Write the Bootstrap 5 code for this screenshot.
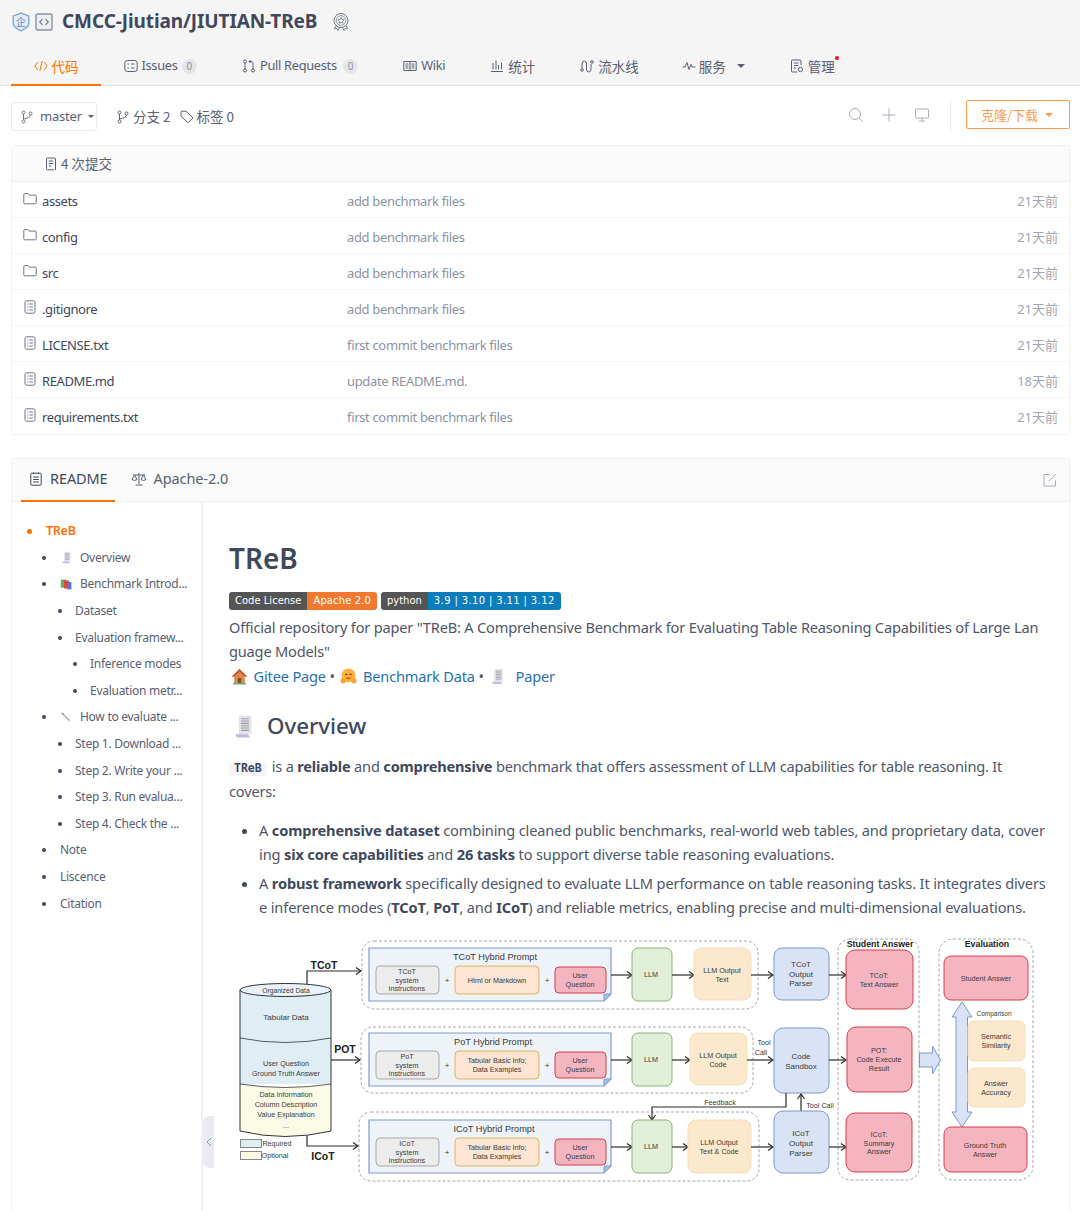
<!DOCTYPE html>
<html lang="en">
<head>
  <meta charset="UTF-8">
  <title>CMCC-Jiutian/JIUTIAN-TReb</title>
  <meta name="viewport" content="width=device-width, initial-scale=1">
  <link href="https://cdn.jsdelivr.net/npm/bootstrap@5.3.0/dist/css/bootstrap.min.css" rel="stylesheet">
  <style>
    html, body { height: 100%; overflow: hidden; }
    body { font-family: "Noto Sans", "Noto Sans CJK SC", sans-serif; font-size: 14px; color: #40485b; background: #fff; }
    .ic { width: 14px; height: 14px; fill: none; stroke: currentColor; stroke-width: 1; flex: none; }
    .cjk { font-family: "Noto Sans CJK SC", "Noto Sans", sans-serif; }

    .repo-head { background: #f5f5f5; border-bottom: 1px solid #e3e3e3; height: 86px; flex: none; }
    .repo-title { height: 43px; padding-left: 12px; gap: 5px; }
    .repo-title h1 { font-size: 19px; font-weight: 700; letter-spacing: -.1px; color: #40485b; margin: 0 10px 0 4px; }
    .repo-nav { padding-left: 11px; height: 43px; }
    .repo-nav a { display: flex; align-items: center; gap: 4px; padding: 5px 22.5px 0; height: 43px; color: #5a6071; text-decoration: none; font-size: 12.8px; letter-spacing: -.3px; position: relative; border-bottom: 2px solid transparent; }
    .repo-nav a.cjk { font-size: 13.5px; letter-spacing: 0; }
    .repo-nav a.on { color: #fe7300; border-bottom-color: #fe7300; }
    .repo-nav a.svc { margin-left: -2px; gap: 3px; }
    .cnt { background: #e3e5e9; color: #8c92a4; border-radius: 8px; font-size: 10px; line-height: 15px; padding: 0 5px; margin-left: 2px; }
    .cnt-tight { margin-left: 0; }
    .caret-dn { width: 0; height: 0; border: 4px solid transparent; border-top-color: currentColor; border-bottom: 0; display: inline-block; }
    .red-dot { position: absolute; top: 13px; right: 18px; width: 4px; height: 4px; background: #f00d2c; border-radius: 50%; }

    .tool-row { padding: 14px 10px 0 11px; height: 59px; flex: none; }
    .branch-btn { height: 29px; width: 86px; margin-top: 2px; border: 1px solid #e8ebf0; border-radius: 3px; color: #5a6071; font-size: 13px; letter-spacing: -.2px; padding: 0 5px 0 8px; gap: 6px; }
    .tool-link { color: #5a6071; font-size: 13.5px; gap: 3px; height: 29px; margin-top: 2px; }
    .tool-ic { color: #a9aebb; width: 16px; height: 16px; }
    .tool-sep { width: 1px; height: 32px; background: #e9ebef; margin: 0 15px 0 20px; }
    .clone-btn { width: 104px; height: 29px; padding: 0 2px 0 0; border: 1px solid #fe9a4f; border-radius: 2px; color: #fe9a4f; font-size: 13px; gap: 7px; }

    .file-card { margin: 0 10px 0 11px; border: 1px solid #eef0f3; border-radius: 3px; height: 290px; flex: none; overflow: hidden; }
    .file-head { height: 36px; background: #fbfbfb; border-bottom: 1px solid #eef0f3; padding-left: 32px; gap: 3px; color: #5a6071; font-size: 13.5px; }
    .file-row { height: 36px; padding: 4px 11px 0; border-color: #f3f4f6; color: #40485b; font-size: 13px; letter-spacing: -.4px; }
    .file-name { width: 324px; gap: 5px; }
    .file-name .ic { color: #6f7585; margin-top: -6px; }
    .file-msg { color: #8c92a4; letter-spacing: -.34px; }
    .file-time { color: #a1a6b3; margin-left: auto; letter-spacing: 0; }

    .readme-card { margin: 23px 10px -3px 11px; border: 1px solid #eef0f3; border-radius: 3px 3px 0 0; min-height: 0; }
    .readme-tabs { height: 43px; background: #fbfbfb; border-bottom: 1px solid #eef0f3; padding-left: 9px; flex: none; }
    .readme-tabs a { display: flex; align-items: center; gap: 7px; height: 43px; padding: 0 7px 2px 8px; color: #5a6071; text-decoration: none; font-size: 14.5px; letter-spacing: -.1px; border-bottom: 2px solid transparent; }
    .readme-tabs a.on { border-bottom-color: #fe7300; color: #40485b; }
    .toc-side { width: 191px; border-right: 2px solid #eef1f5; padding-top: 16px; flex: none; position: relative; font-size: 12px; letter-spacing: -.27px; }
    .toc-line { height: 26.6px; display: flex; align-items: center; color: #5a6071; white-space: nowrap; position: relative; }
    .toc-line::before { content: ""; width: 4px; height: 4px; border-radius: 50%; background: #40485b; margin-right: 14px; flex: none; }
    .lv0 { padding-left: 15px; color: #fe7300; font-weight: 600; font-size: 12.5px; }
    .lv0::before { background: #fe7300; width: 5px; height: 5px; margin-right: 14px; }
    .lv1 { padding-left: 30px; }
    .lv2 { padding-left: 46px; }
    .lv2::before { margin-right: 13px; }
    .lv3 { padding-left: 61px; }
    .lv3::before { margin-right: 13px; }
    .emo { width: 13px; height: 13px; margin: 0 7px 0 0; flex: none; }
    .fold-tab { position: absolute; right: -13px; top: 614px; width: 11px; height: 52px; background: #e8ecf1; border-radius: 6px 0 0 6px; color: #8c92a4; }

    .md-body { padding: 38px 20px 0 26px; font-size: 14.6px; letter-spacing: -.19px; line-height: 24.4px; color: #4f5668; word-break: break-all; min-width: 0; }
    .md-body h1 { font-size: 28px; font-weight: 600; letter-spacing: 0; line-height: 36px; color: #40485b; margin: 0 0 16px; }
    .md-body h2 { font-size: 22.4px; font-weight: 500; letter-spacing: -.1px; line-height: 30px; color: #40485b; margin: 23px 0 13px; display: flex; align-items: center; gap: 11px; }
    .md-body h2 svg { margin-left: 2px; }
    .md-body a { color: #2a70ac; text-decoration: none; }
    .md-body b { color: #40485b; font-weight: 700; }
    .md-body ul { padding-left: 30px; margin: 15px 0 14px; letter-spacing: -.14px; }
    .md-body li { margin-bottom: 4px; }
    .md-body li::marker { color: #40485b; }
    .md-body p { margin: 0; }
    .sh-badge { display: inline-flex; height: 18px; border-radius: 3px; overflow: hidden; font-family: "DejaVu Sans", sans-serif; font-size: 10px; letter-spacing: 0; line-height: 18px; color: #fff; margin-right: 4px; word-break: normal; }
    .sh-badge span { padding: 0 6px; white-space: nowrap; }
    .sh-l { background: #555; }
    .sh-o { background: #f0792f; letter-spacing: .1px; }
    .sh-b { background: #0b7cbc; letter-spacing: .37px; }
    .badge-row { height: 18px; margin-bottom: 5px; display: flex; }
    .name-pill { background: #f5f5f7; border-radius: 4px; padding: 1px 5px; margin-right: 5px; font-family: "DejaVu Sans Mono", monospace; font-size: 11.5px; line-height: 1; display: inline-block; font-weight: 700; letter-spacing: 0; color: #40485b; }
    .emo-in { width: 17px; height: 17px; vertical-align: -3px; margin: 0 2px; }
    .flow-pic { display: block; width: 820px; height: 260px; margin: 14px 0 0 1px; }
    .flow-pic text { font-family: "Liberation Sans", sans-serif; fill: #3a3a3a; text-anchor: middle; font-size: 7.2px; letter-spacing: 0; }
    .flow-pic .tt { font-size: 9.2px; }
    .flow-pic .hd { font-size: 8.8px; font-weight: 700; fill: #222; }
    .flow-pic .lb { font-size: 10.5px; font-weight: 700; fill: #222; }
    .flow-pic .bg { font-size: 8px; }
    .dash { fill: none; stroke: #a8a8a8; stroke-width: 1; stroke-dasharray: 3 2; }
    .pr { fill: #eef3f9; stroke: #7c9bcb; stroke-width: 1.2; }
    .gr { fill: #ececec; stroke: #a9a9a9; stroke-width: 1; }
    .og { fill: #fde4d3; stroke: #d9b55c; stroke-width: 1; }
    .rd { fill: #f5b5c0; stroke: #d33f4b; stroke-width: 1; }
    .lg { fill: #e1eed8; stroke: #8fb17a; stroke-width: 1; }
    .yl { fill: #fbe8cd; stroke: #f5dfb8; stroke-width: 1; }
    .bl { fill: #d9e3f5; stroke: #7b9acb; stroke-width: 1; }
    .ln { fill: none; stroke: #2b2b2b; stroke-width: 1.2; }
  </style>
</head>
<body>
<svg class="d-none">
  <symbol id="i-folder" viewBox="0 0 14 14"><path d="M.8 2.500q0-.9.900-.9h3.200l1.300 1.500h6.100q.9 0 .9.900v6.900q0 .9-.9.900H1.700q-.9 0-.9-.9z"/></symbol>
  <symbol id="i-file" viewBox="0 0 14 14"><rect x="2" y=".8" width="10" height="12.400" rx="1.600"/><path d="M4.300 4h1M6.500 4h3.400M4.300 7h1M6.500 7h3.400M4.300 10h1M6.500 10h3.400"/></symbol>
  <symbol id="i-commit" viewBox="0 0 14 14"><path d="M10 12.800H3.500q-1 0-1-1V2q0-1 1-1h7q1 0 1 1v8M4.800 4h4.400M4.800 6.500h4.400M4.800 9h2.400M11.500 10v3"/></symbol>
  <symbol id="i-branch" viewBox="0 0 14 14"><circle cx="3.500" cy="2.500" r="1.500"/><circle cx="3.500" cy="11.500" r="1.500"/><circle cx="10.500" cy="3.500" r="1.500"/><path d="M3.500 4v6M10.500 5q0 3-7 4"/></symbol>
  <symbol id="i-tag" viewBox="0 0 14 14"><path d="M1 2.200q0-1 1-1h4l7 6.600-5 5-7-6.600zM4 4.400h.4"/></symbol>
  <symbol id="i-readme" viewBox="0 0 14 14"><rect x="1.800" y="1.200" width="10.400" height="12" rx="1"/><path d="M4.500.5v1.600M9.500.5v1.600M4.200 5h5.600M4.200 7.500h5.600M4.200 10h5.600"/></symbol>
  <symbol id="i-scale" viewBox="0 0 16 14"><path d="M8 1v11M4.500 13h7M2 3h12M3.500 3 1 7.500q2.500 2 5 0L3.500 3M12.500 3 10 7.500q2.500 2 5 0L12.500 3"/></symbol>
  <symbol id="e-house" viewBox="0 0 16 16"><path d="M8 1 .8 8h2.200v6.500h10V8h2.200z" fill="#d98a4b"/><path d="M8 1 .8 8h2.200L8 3.500 13 8h2.200z" fill="#c9503c"/><rect x="6.500" y="9.500" width="3" height="5" fill="#7a4a2b"/><rect x="2" y="14" width="12" height="1.500" fill="#5fb36a"/></symbol>
  <symbol id="e-hug" viewBox="0 0 16 16"><circle cx="8" cy="7" r="6.500" fill="#fbb33c"/><path d="M5 6.500q1-1.500 2 0M9 6.500q1-1.500 2 0" fill="none" stroke="#7a4a1f"/><path d="M5 9q3 3 6 0" fill="#c94f3c"/><circle cx="3" cy="12" r="2.500" fill="#f9a531"/><circle cx="13" cy="12" r="2.500" fill="#f9a531"/></symbol>
  <symbol id="e-scroll" viewBox="0 0 16 16"><rect x="5" y="1" width="8" height="12" fill="#e3e3e8"/><path d="M6.500 3h5M6.500 4.500h5M6.500 6h5M6.500 7.500h5M6.500 9h5M6.500 10.500h5" stroke="#9a9aa6" stroke-width=".7"/><path d="M3 13h8q.5 2 2 2H4.500Q3 15 3 13z" fill="#c8b8e0"/></symbol>
  <symbol id="e-books" viewBox="0 0 16 16"><rect x="1" y="2" width="7" height="10" fill="#58b368"/><rect x="5" y="3" width="6" height="10" fill="#e0453f"/><rect x="9" y="5" width="5" height="9" fill="#5b6fd8"/></symbol>
  <symbol id="e-wrench" viewBox="0 0 16 16"><path d="M3 3l9 9" stroke="#b9bdc6" stroke-width="2.500"/><path d="M2 1.500 5 3 3 5 1.500 2z" fill="#9da2ad"/></symbol>
</svg>

<div class="d-flex flex-column h-100">

  <div class="repo-head">
    <div class="repo-title d-flex align-items-center">
      <svg width="18" height="20" viewBox="0 0 18 20">
        <path d="M9 1.200 16.800 4v7.600q0 4-7.800 7.200-7.800-3.200-7.800-7.200V4z" fill="#e4ecf6" stroke="#7ea3d0" stroke-width="1.300"/>
        <text x="9" y="13.500" font-size="10" text-anchor="middle" fill="#5e8bc4" font-family="Noto Sans CJK SC">企</text>
      </svg>
      <svg width="18" height="18" viewBox="0 0 18 18"><rect x="1" y="1" width="16" height="16" rx="1.500" fill="#eceef1" stroke="#8c92a4" stroke-width="1.400"/><path d="M7.400 6.200 4.800 9l2.600 2.800M10.600 6.200 13.200 9l-2.600 2.800" fill="none" stroke="#7a8092" stroke-width="1.200"/></svg>
      <h1>CMCC-Jiutian/JIUTIAN-TReB</h1>
      <svg width="18" height="20" viewBox="0 0 18 20" fill="none" stroke="#6f7585"><circle cx="9" cy="8.500" r="7"/><circle cx="9" cy="8.500" r="4.800" stroke-width=".7"/><path d="m9 5.400 1 2 2.100.3-1.500 1.500.4 2.100L9 10.300l-2 1 .4-2.100L5.900 7.700 8 7.400z" stroke-width=".8"/><path d="m3.800 13.500-1.300 3.300 2.300-.3 1.200 2 1.500-3M14.200 13.500l1.300 3.300-2.300-.3-1.200 2-1.500-3" stroke-width=".9"/></svg>
    </div>
    <nav class="repo-nav d-flex">
      <a class="on cjk" href="#"><svg class="ic" viewBox="0 0 14 14"><path d="M4 3 .8 7 4 11M10 3l3.200 4L10 11M8.200 2 5.800 12"/></svg>代码</a>
      <a href="#"><svg class="ic" viewBox="0 0 14 14"><rect x=".8" y="1.500" width="12.400" height="11" rx="2.500"/><path d="M3.500 5h1.500M3.500 9h1.500M7 5h3.500M7 9h3.500"/></svg>Issues<span class="cnt cnt-tight">0</span></a>
      <a href="#"><svg class="ic" viewBox="0 0 14 14"><circle cx="3" cy="2.500" r="1.500"/><circle cx="3" cy="11.500" r="1.500"/><circle cx="11" cy="11.500" r="1.500"/><path d="M3 4v6M11 10V4.500q0-2-2-2H7M8.500 1 7 2.500 8.500 4"/></svg>Pull Requests<span class="cnt">0</span></a>
      <a href="#"><svg class="ic" viewBox="0 0 14 14"><path d="M.8 2.500h12.400v9H.8zM7 2.500v9M2.500 5h3M2.500 7h3M2.500 9h3M8.500 5h3M8.500 7h3M8.500 9h3"/></svg>Wiki</a>
      <a class="cjk" href="#"><svg class="ic" viewBox="0 0 14 14"><path d="M1 12.500h12M3 10.500V4M6 10.500V1.500M8.500 10.500V6M11.500 10.500V3.500"/></svg>统计</a>
      <a class="cjk" href="#"><svg class="ic" viewBox="0 0 14 14"><circle cx="2" cy="11" r="1.300"/><circle cx="12" cy="3" r="1.300"/><path d="M2 9.500V5q0-3 2.300-3t2.200 3v5q0 3 2.200 3t2.300-3V5"/></svg>流水线</a>
      <a class="cjk svc" href="#"><svg class="ic" viewBox="0 0 14 14"><path d="M.5 8h2.500l2-4.500 2 7 2-5 1 2.500h3.500"/></svg>服务<span class="caret-dn ms-2"></span></a>
      <a class="cjk" href="#"><svg class="ic" viewBox="0 0 14 14"><path d="M11 6V2q0-1-1-1H2.500q-1 0-1 1v10q0 1 1 1H7M4 4h4.500M4 6.500h4.500M4 9h2"/><circle cx="10.500" cy="10.500" r="2.200"/></svg>管理<span class="red-dot"></span></a>
    </nav>
  </div>

  <div class="tool-row d-flex align-items-start">
    <div class="branch-btn d-flex align-items-center">
      <svg class="ic text-secondary" viewBox="0 0 14 14"><use href="#i-branch"/></svg>master<span class="caret-dn" style="border-width:3.500px;border-bottom:0"></span>
    </div>
    <div class="tool-link d-flex align-items-center cjk" style="margin-left:19px"><svg class="ic" viewBox="0 0 14 14"><use href="#i-branch"/></svg>分支 2</div>
    <div class="tool-link d-flex align-items-center cjk" style="margin-left:9px"><svg class="ic" viewBox="0 0 14 14"><use href="#i-tag"/></svg>标签 0</div>
    <div class="ms-auto d-flex align-items-center" style="gap:17px;height:29px">
      <svg class="ic tool-ic" viewBox="0 0 16 16"><circle cx="7" cy="7" r="5.500"/><path d="m11 11 4 4"/></svg>
      <svg class="ic tool-ic" viewBox="0 0 16 16"><path d="M8 1.500v13M1.500 8h13"/></svg>
      <svg class="ic tool-ic" viewBox="0 0 16 16"><rect x="1.500" y="2" width="13" height="9" rx="1"/><path d="M8 11v3M5 14h6"/></svg>
    </div>
    <div class="tool-sep"></div>
    <button class="btn clone-btn d-flex align-items-center justify-content-center cjk">克隆/下载<span class="caret-dn"></span></button>
  </div>

  <div class="file-card">
    <div class="file-head d-flex align-items-center cjk"><svg class="ic" viewBox="0 0 14 14"><use href="#i-commit"/></svg>4 次提交</div>
    <div class="list-group list-group-flush" id="fileList"></div>
  </div>

  <div class="readme-card flex-grow-1 d-flex flex-column">
    <div class="readme-tabs d-flex align-items-stretch">
      <a class="on" href="#"><svg class="ic" viewBox="0 0 14 14"><use href="#i-readme"/></svg>README</a>
      <a class="ms-2" href="#"><svg class="ic" style="width:16px" viewBox="0 0 16 14"><use href="#i-scale"/></svg>Apache-2.0</a>
      <div class="ms-auto d-flex align-items-center pe-2 me-1"><svg class="ic" viewBox="0 0 14 14" style="color:#a9aebb"><path d="M12.500 7.500v5.500h-11.500v-11.500h6M5.500 8.500 13 1"/></svg></div>
    </div>
    <div class="d-flex flex-grow-1 align-items-stretch" style="min-height:0">
      <aside class="toc-side">
        <div id="toc"></div>
        <div class="fold-tab d-flex align-items-center justify-content-center"><svg width="6" height="10" viewBox="0 0 6 10" fill="none" stroke="currentColor"><path d="M5 1 1 5l4 4"/></svg></div>
      </aside>
      <main class="md-body flex-grow-1">
        <h1>TReB</h1>
        <div class="badge-row">
          <span class="sh-badge"><span class="sh-l">Code License</span><span class="sh-o">Apache 2.0</span></span>
          <span class="sh-badge"><span class="sh-l">python</span><span class="sh-b">3.9 | 3.10 | 3.11 | 3.12</span></span>
        </div>
        <p>Official repository for paper "TReB: A Comprehensive Benchmark for Evaluating Table Reasoning Capabilities of Large Lan<br>guage Models"</p>
        <p style="word-break:normal">
          <svg class="emo-in" viewBox="0 0 16 16"><use href="#e-house"/></svg>&nbsp;<a href="#">Gitee Page</a> •
          <svg class="emo-in" viewBox="0 0 16 16"><use href="#e-hug"/></svg>&nbsp;<a href="#">Benchmark Data</a> •
          <svg class="emo-in" viewBox="0 0 16 16"><use href="#e-scroll"/></svg>&nbsp;&nbsp;<a href="#">Paper</a>
        </p>
        <h2><svg width="25" height="27" viewBox="0 0 16 16"><use href="#e-scroll"/></svg>Overview</h2>
        <p><span class="name-pill">TReB</span>is a <b>reliable</b> and <b>comprehensive</b> benchmark that offers assessment of LLM capabilities for table reasoning. It<br>covers:</p>
        <ul>
          <li>A <b>comprehensive dataset</b> combining cleaned public benchmarks, real-world web tables, and proprietary data, cover<br>ing <b>six core capabilities</b> and <b>26 tasks</b> to support diverse table reasoning evaluations.</li>
          <li>A <b>robust framework</b> specifically designed to evaluate LLM performance on table reasoning tasks. It integrates divers<br>e inference modes (<b>TCoT</b>, <b>PoT</b>, and <b>ICoT</b>) and reliable metrics, enabling precise and multi-dimensional evaluations.</li>
        </ul>

        <svg class="flow-pic" viewBox="230 935 820 260">
          <defs>
            <marker id="ah" markerWidth="7" markerHeight="8" refX="6" refY="4" orient="auto" markerUnits="userSpaceOnUse"><path d="M1 .5 6 4 1 7.500" fill="none" stroke="#2b2b2b" stroke-width="1.200"/></marker>
          </defs>
          <rect class="dash" x="362" y="942" width="396" height="68" rx="12"/>
          <rect class="dash" x="361" y="1028" width="392" height="66" rx="12"/>
          <rect class="dash" x="359" y="1113" width="400" height="69" rx="12"/>
          <rect class="dash" x="838" y="940" width="81" height="241" rx="12"/>
          <rect class="dash" x="939" y="940" width="94" height="241" rx="14"/>

          <!-- left cylinder -->
          <path d="M240 991v94h91v-94z" fill="#dfedf5"/>
          <path d="M240 1085v47q45 11 91 0v-47q-45 8-91 0z" fill="#fbfbe5"/>
          <path d="M240 991v141q45 11 91 0V991" fill="none" stroke="#333" stroke-width="1"/>
          <path d="M240 1039q45 9 91 0M240 1085q45 7 91 0" fill="none" stroke="#333" stroke-width=".8"/>
          <ellipse cx="285.500" cy="991" rx="45.500" ry="6.500" fill="#e8f2f8" stroke="#333"/>
          <text x="286" y="993.500" style="font-size:6.800px">Organized Data</text>
          <text x="286" y="1020.500" class="bg">Tabular Data</text>
          <text x="286" y="1067">User Question</text>
          <text x="286" y="1077">Ground Truth Answer</text>
          <text x="286" y="1098">Data Information</text>
          <text x="286" y="1108">Column Description</text>
          <text x="286" y="1118">Value Explanation</text>
          <text x="286" y="1129">...</text>
          <rect x="240.500" y="1140.500" width="21" height="8" fill="#dfedf5" stroke="#888"/>
          <rect x="240.500" y="1152.500" width="21" height="8" fill="#fbfbe5" stroke="#888"/>
          <text x="277" y="1147">Required</text>
          <text x="275" y="1158.500">Optional</text>

          <path class="ln" d="M307 985v-13h54" marker-end="url(#ah)"/>
          <path class="ln" d="M331 1061h29" marker-end="url(#ah)"/>
          <path class="ln" d="M307 1137v10h51" marker-end="url(#ah)"/>
          <text class="lb" x="324" y="970">TCoT</text>
          <text class="lb" x="345" y="1054">POT</text>
          <text class="lb" x="323" y="1161">ICoT</text>

          <!-- TCoT row -->
          <path class="pr" d="M369 949h242v46l-7 7H369z"/><path d="M604 1002v-7h7z" fill="#a8c0e6" stroke="#7c9bcb"/>
          <text class="tt" x="495" y="961">TCoT Hybrid Prompt</text>
          <rect class="gr" x="376" y="967" width="63" height="28" rx="4"/>
          <text x="407" y="975">TCoT</text><text x="407" y="983.500">system</text><text x="407" y="992">instructions</text>
          <text class="bg" x="447" y="984">+</text>
          <rect class="og" x="455" y="967" width="84" height="28" rx="4"/>
          <text x="497" y="983.500">Html or Markdown</text>
          <text class="bg" x="547" y="984">+</text>
          <rect class="rd" x="555" y="968" width="51" height="26" rx="4"/>
          <text x="580" y="979">User</text><text x="580" y="988">Question</text>
          <path class="ln" d="M611 976h21" marker-end="url(#ah)"/>
          <rect class="lg" x="632" y="949" width="40" height="53" rx="6"/>
          <text x="651" y="978">LLM</text>
          <path class="ln" d="M672 976h22" marker-end="url(#ah)"/>
          <rect class="yl" x="694" y="949" width="57" height="52" rx="8"/>
          <text x="722" y="974">LLM Output</text><text x="722" y="983">Text</text>
          <path class="ln" d="M751 976h22" marker-end="url(#ah)"/>
          <rect class="bl" x="774" y="949" width="55" height="52" rx="8"/>
          <text class="bg" x="801" y="968">TCoT</text><text class="bg" x="801" y="977.500">Output</text><text class="bg" x="801" y="987">Parser</text>
          <path class="ln" d="M829 976h17" marker-end="url(#ah)"/>
          <rect class="rd" x="846" y="951" width="67" height="59" rx="9"/>
          <text x="879" y="979">TCoT:</text><text x="879" y="987.500">Text Answer</text>

          <!-- PoT row -->
          <path class="pr" d="M369 1034h242v46l-7 7H369z"/><path d="M604 1087v-7h7z" fill="#a8c0e6" stroke="#7c9bcb"/>
          <text class="tt" x="493" y="1046">PoT Hybrid Prompt</text>
          <rect class="gr" x="376" y="1052" width="63" height="28" rx="4"/>
          <text x="407" y="1060">PoT</text><text x="407" y="1068.500">system</text><text x="407" y="1077">instructions</text>
          <text class="bg" x="447" y="1069">+</text>
          <rect class="og" x="455" y="1052" width="84" height="28" rx="4"/>
          <text x="497" y="1064">Tabular Basic Info;</text><text x="497" y="1073">Data Examples</text>
          <text class="bg" x="547" y="1069">+</text>
          <rect class="rd" x="555" y="1053" width="51" height="26" rx="4"/>
          <text x="580" y="1064">User</text><text x="580" y="1073">Question</text>
          <path class="ln" d="M611 1061h21" marker-end="url(#ah)"/>
          <rect class="lg" x="632" y="1034" width="40" height="53" rx="6"/>
          <text x="651" y="1063">LLM</text>
          <path class="ln" d="M672 1061h18" marker-end="url(#ah)"/>
          <rect class="yl" x="690" y="1034" width="57" height="52" rx="8"/>
          <text x="718" y="1059">LLM Output</text><text x="718" y="1068">Code</text>
          <path class="ln" d="M747 1061h26" marker-end="url(#ah)"/>
          <text x="764" y="1046">Tool</text><text x="761" y="1056">Call</text>
          <rect class="bl" x="774" y="1029" width="55" height="65" rx="9"/>
          <text class="bg" x="801" y="1060">Code</text><text class="bg" x="801" y="1070">Sandbox</text>
          <path class="ln" d="M829 1061h17" marker-end="url(#ah)"/>
          <rect class="rd" x="847" y="1028" width="65" height="65" rx="9"/>
          <text x="879" y="1054">POT:</text><text x="879" y="1063">Code Execute</text><text x="879" y="1072">Result</text>

          <!-- ICoT row -->
          <path class="ln" d="M786 1094v14H652v13" marker-end="url(#ah)"/>
          <path class="ln" d="M801 1112v-17" marker-end="url(#ah)"/>
          <text x="720" y="1105.500">Feedback</text>
          <text x="820" y="1108.500">Tool Call</text>
          <path class="pr" d="M369 1121h242v46l-7 7H369z"/><path d="M604 1174v-7h7z" fill="#a8c0e6" stroke="#7c9bcb"/>
          <text class="tt" x="494" y="1133">ICoT Hybrid Prompt</text>
          <rect class="gr" x="376" y="1139" width="63" height="28" rx="4"/>
          <text x="407" y="1147">ICoT</text><text x="407" y="1155.500">system</text><text x="407" y="1164">instructions</text>
          <text class="bg" x="447" y="1156">+</text>
          <rect class="og" x="455" y="1139" width="84" height="28" rx="4"/>
          <text x="497" y="1151">Tabular Basic Info;</text><text x="497" y="1160">Data Examples</text>
          <text class="bg" x="547" y="1156">+</text>
          <rect class="rd" x="555" y="1140" width="51" height="26" rx="4"/>
          <text x="580" y="1151">User</text><text x="580" y="1160">Question</text>
          <path class="ln" d="M611 1148h21" marker-end="url(#ah)"/>
          <rect class="lg" x="632" y="1121" width="40" height="53" rx="6"/>
          <text x="651" y="1150">LLM</text>
          <path class="ln" d="M672 1148h16" marker-end="url(#ah)"/>
          <rect class="yl" x="688" y="1121" width="63" height="53" rx="8"/>
          <text x="719" y="1146">LLM Output</text><text x="719" y="1155">Text &amp; Code</text>
          <path class="ln" d="M751 1148h22" marker-end="url(#ah)"/>
          <rect class="bl" x="774" y="1112" width="55" height="62" rx="9"/>
          <text class="bg" x="801" y="1137">ICoT</text><text class="bg" x="801" y="1147">Output</text><text class="bg" x="801" y="1156.500">Parser</text>
          <path class="ln" d="M829 1148h17" marker-end="url(#ah)"/>
          <rect class="rd" x="846" y="1114" width="66" height="59" rx="9"/>
          <text x="879" y="1138">ICoT:</text><text x="879" y="1146.500">Summary</text><text x="879" y="1155">Answer</text>

          <!-- right side -->
          <text class="hd" x="880" y="948">Student Answer</text>
          <text class="hd" x="987" y="948">Evaluation</text>
          <path d="M919.500 1054h13v-7l8 14-8 14v-7h-13z" fill="#d9e3f5" stroke="#7b9acb"/>
          <rect class="rd" x="944" y="957" width="84" height="44" rx="7"/>
          <text x="986" y="981.500">Student Answer</text>
          <path d="M962 1003l10 15h-4.500v95h4.500l-10 15-10-15h4v-95h-4z" fill="#d9e3f5" stroke="#7b9acb"/>
          <text x="994" y="1016.500" style="font-size:6.500px">Comparison</text>
          <rect class="yl" x="968" y="1022" width="57" height="40" rx="6"/>
          <text x="996" y="1040">Semantic</text><text x="996" y="1049">Similarity</text>
          <rect class="yl" x="968" y="1069" width="57" height="39" rx="6"/>
          <text x="996" y="1086.500">Answer</text><text x="996" y="1095.500">Accuracy</text>
          <rect class="rd" x="944" y="1128" width="83" height="45" rx="7"/>
          <text x="985" y="1149">Ground Truth</text><text x="985" y="1158">Answer</text>
        </svg>
      </main>
    </div>
  </div>
</div>

<script>
  const files = [
    ['folder', 'assets', 'add benchmark files', '21天前'],
    ['folder', 'config', 'add benchmark files', '21天前'],
    ['folder', 'src', 'add benchmark files', '21天前'],
    ['file', '.gitignore', 'add benchmark files', '21天前'],
    ['file', 'LICENSE.txt', 'first commit benchmark files', '21天前'],
    ['file', 'README.md', 'update README.md.', '18天前'],
    ['file', 'requirements.txt', 'first commit benchmark files', '21天前']
  ];
  let rows = '';
  files.forEach(f => {
    rows += `<div class="list-group-item file-row d-flex align-items-center">
      <div class="file-name d-flex align-items-center"><svg class="ic" viewBox="0 0 14 14"><use href="#i-${f[0]}"/></svg>${f[1]}</div>
      <div class="file-msg">${f[2]}</div>
      <div class="file-time">${f[3]}</div>
    </div>`;
  });
  document.getElementById('fileList').innerHTML = rows;

  const toc = [
    [0, 'TReB'], [1, 'Overview', 'scroll'], [1, 'Benchmark Introd...', 'books'], [2, 'Dataset'],
    [2, 'Evaluation framew...'], [3, 'Inference modes'], [3, 'Evaluation metr...'],
    [1, 'How to evaluate ...', 'wrench'], [2, 'Step 1. Download ...'], [2, 'Step 2. Write your ...'],
    [2, 'Step 3. Run evalua...'], [2, 'Step 4. Check the ...'], [1, 'Note'], [1, 'Liscence'], [1, 'Citation']
  ];
  let lines = '';
  toc.forEach(t => {
    const emo = t[2] ? `<svg class="emo" viewBox="0 0 16 16"><use href="#e-${t[2]}"/></svg>` : '';
    lines += `<div class="toc-line lv${t[0]}">${emo}${t[1]}</div>`;
  });
  document.getElementById('toc').innerHTML = lines;
</script>
<script src="https://cdn.jsdelivr.net/npm/bootstrap@5.3.0/dist/js/bootstrap.bundle.min.js"></script>
</body>
</html>
